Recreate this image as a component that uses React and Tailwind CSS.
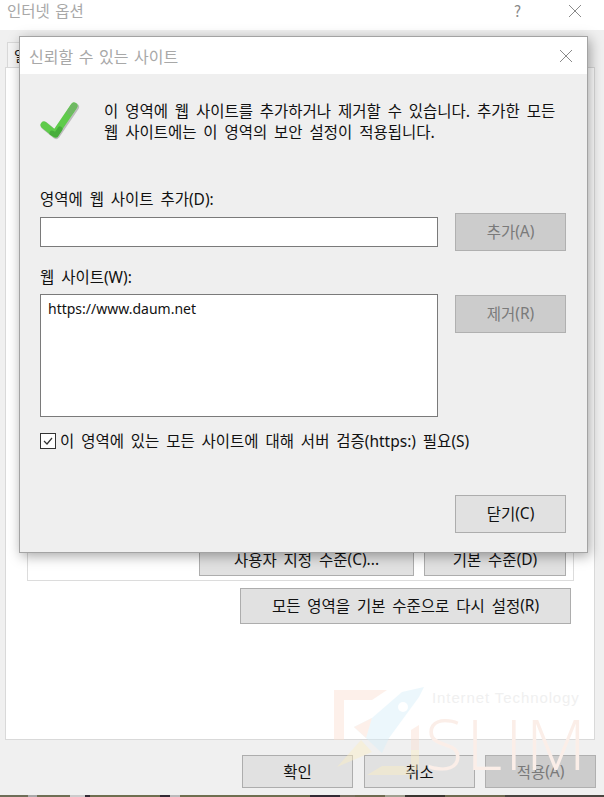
import React from 'react';

const font = { fontFamily: '"Noto Sans CJK KR", "Noto Sans", sans-serif' };

// the mottled edge of whatever sat under the screenshot
const bottomStrip = [
    [28, '#6e6e58'], [9, '#aaaaaa'], [33, '#6f6f55'], [15, '#cccccc'], [5, '#332a33'], [70, '#6f6f50'],
    [10, '#332a33'], [10, '#bbbbbb'], [130, '#6f6f50'], [30, '#332a33'], [15, '#777060'], [30, '#6e6a50'],
    [20, '#a0a090'], [40, '#3a3530'], [60, '#6e6a50'], [99, '#4a4540'],
];

// latin bits are set apart from the hangul next to them
function L({ children }) {
    return <span className="font-['Noto_Sans'] text-[15.5px] [word-spacing:0]">{children}</span>;
}

function WinButton({ className = '', children, disabled }) {
    return (
        <div className={`flex items-center justify-center border text-[15.5px] [word-spacing:3.4px] ${disabled ? 'border-[#b0b0b0] bg-[#cccccc] text-[#7a7a7a]' : 'border-[#adadad] bg-[#e1e1e1] text-[#111]'} ${className}`}>
            {children}
        </div>
    );
}

function CheckMark() {
    return (
        <svg width="40" height="40" viewBox="0 0 40 40" fill="none" strokeLinecap="round" strokeLinejoin="round" className="mt-[3px] shrink-0">
            <path d="M5 24 L16 33 L35 5" stroke="#9a9a9a" strokeWidth="8" opacity="0.6" />
            <path d="M4 23 L15 32 L34 4" stroke="#5fcb4b" strokeWidth="7" />
            <path d="M12 31 L16 33 L20 27" stroke="#48ad3c" strokeWidth="5" />
            <path d="M30 10 L34 4" stroke="#6fb863" strokeWidth="6" />
        </svg>
    );
}

function Watermark() {
    return (
        <div className="absolute left-[330px] top-[680px] h-[115px] w-[274px] pointer-events-none">
            <svg width="110" height="110" viewBox="0 0 110 110" className="absolute left-0 top-0" opacity="0.45">
                <path d="M4 10 H57 L42 20 H14 V60 H4 Z" fill="#fbe0d2" />
                <path d="M94 7 L72 12 L42 38 L24 47 L36 58 L52 73 L59 58 L89 17 Z" fill="#d6effa" />
                <path d="M24 47 L42 38 L36 58 Z" fill="#fbe0d2" />
                <circle cx="73" cy="27" r="5" fill="#ffffff" />
                <path d="M31 60 L42 72 L7 87 Z" fill="#fdefc4" />
                <path d="M37 95 L52 86 H74 L84 95 Z" fill="#fdefc4" />
                <path d="M81 50 L89 45 V70 H81 Z" fill="#fbe0d2" />
                <path d="M81 70 H89 V90 H81 Z" fill="#fdefc4" />
            </svg>
            <span className="absolute left-[102px] top-[9px] text-[15px] leading-[18px] tracking-[0.9px] text-[#f0f0f0]" style={{ fontFamily: '"Liberation Sans", sans-serif' }}>Internet Technology</span>
            <span className="absolute left-[95px] top-[18px] text-[70px] font-light leading-[90px] tracking-[3px] text-[#fbeee8]" style={{ fontFamily: '"Open Sans", sans-serif' }}>SLIM</span>
        </div>
    );
}

function TrustedSitesDialog() {
    return (
        <div className="absolute left-[19px] top-[36px] flex h-[517px] w-[569px] flex-col border border-[#a3a3a3] bg-[#efefef] shadow-[2px_3px_12px_rgba(0,0,0,0.35)]">
            <div className="flex h-[37px] items-center justify-between bg-white pl-[9px] pr-[14px]">
                <span className="text-[16px] [word-spacing:2px] text-[#a8a8a8]">신뢰할 수 있는 사이트</span>
                <svg width="14" height="14" viewBox="0 0 14 14" stroke="#8a8a8a" strokeWidth="1"><path d="M1 1 L13 13 M13 1 L1 13" /></svg>
            </div>

            <div className="flex flex-1 flex-col pl-[20px] pr-[21px] text-[15.5px] text-[#111] [word-spacing:3.4px]">
                <div className="mt-[25px] flex gap-[24px]">
                    <CheckMark />
                    <p className="mt-[1px] leading-[21px]">
                        이 영역에 웹 사이트를 추가하거나 제거할 수 있습니다. 추가한 모든<br />
                        웹 사이트에는 이 영역의 보안 설정이 적용됩니다.
                    </p>
                </div>

                <div className="mt-[46px] leading-[21px]">영역에 웹 사이트 추가<L>(D):</L></div>
                <div className="mt-[7px] flex items-start justify-between">
                    <div className="h-[30px] w-[398px] border border-[#7a7a7a] bg-white" />
                    <WinButton disabled className="mt-[-4px] h-[38px] w-[111px]">추가<L>(A)</L></WinButton>
                </div>

                <div className="mt-[15px] leading-[21px]">웹 사이트<L>(W):</L></div>
                <div className="mt-[6px] flex items-start justify-between">
                    <div className="h-[123px] w-[398px] border border-[#7a7a7a] bg-white px-[7px] pt-[3px] font-['Noto_Sans'] text-[14px] leading-[21px] [word-spacing:0]">https://www.daum.net</div>
                    <WinButton disabled className="mt-[1px] h-[38px] w-[111px]">제거<L>(R)</L></WinButton>
                </div>

                <div className="mt-[13px] flex items-center gap-[4px]">
                    <div className="flex h-[16px] w-[16px] items-center justify-center border border-[#333] bg-white">
                        <svg width="12" height="12" viewBox="0 0 12 12" fill="none" stroke="#333" strokeWidth="1.2"><path d="M2 6 L5 9 L10 3" /></svg>
                    </div>
                    <span className="leading-[21px]">이 영역에 있는 모든 사이트에 대해 서버 검증<L>(https:)</L> 필요<L>(S)</L></span>
                </div>

                <div className="mt-auto mb-[19px] flex justify-end">
                    <WinButton className="h-[38px] w-[111px]">닫기<L>(C)</L></WinButton>
                </div>
            </div>
        </div>
    );
}

export default function App() {
    return (
        <div className="relative flex h-[797px] w-[604px] flex-col overflow-hidden bg-white" style={font}>
            <div className="flex h-[30px] shrink-0 items-start justify-between bg-white pl-[7px] pr-[22px]">
                <span className="text-[15.5px] leading-[21px] [word-spacing:2px] text-[#a8a8a8]">인터넷 옵션</span>
                <div className="flex items-center gap-[47px] pt-[3px]">
                    <span className="text-[15px] leading-[16px] text-[#8a8a8a]">?</span>
                    <svg width="14" height="14" viewBox="0 0 14 14" stroke="#8a8a8a" strokeWidth="1"><path d="M1 1 L13 13 M13 1 L1 13" /></svg>
                </div>
            </div>

            <div className="flex flex-1 flex-col bg-[#f0f0f0] pl-[5px] pr-[9px] pt-[12px]">
                <div className="ml-[2px] h-[25px] w-[40px] border border-b-0 border-[#d9d9d9] bg-[#f5f5f5] pl-[6px] text-[14px] leading-[24px] text-[#111]">일반</div>
                <div className="flex h-[673px] flex-col border border-[#d9d9d9] bg-white pl-[21px] pr-[20px]">
                    <div className="mt-[8px] flex h-[505px] items-end justify-end gap-[10px] border border-[#dcdcdc] pb-[4px] pr-[7px]">
                        <WinButton className="h-[32px] w-[215px]">사용자 지정 수준<L>(C)...</L></WinButton>
                        <WinButton className="h-[32px] w-[142px]">기본 수준<L>(D)</L></WinButton>
                    </div>
                    <div className="mt-[7px] flex justify-end pr-[3px]">
                        <WinButton className="h-[36px] w-[331px]">모든 영역을 기본 수준으로 다시 설정<L>(R)</L></WinButton>
                    </div>
                </div>
                <div className="mt-[15px] flex justify-end gap-[10px] mr-[-1px]">
                    <WinButton className="mr-[1px] h-[33px] w-[111px]">확인</WinButton>
                    <WinButton className="h-[33px] w-[111px]">취소</WinButton>
                    <WinButton disabled className="h-[33px] w-[111px]">적용<L>(A)</L></WinButton>
                </div>
            </div>

            <div className="flex h-[2px] shrink-0">
                {bottomStrip.map(([w, color], i) => (
                    <div key={i} className="h-full" style={{ width: w, backgroundColor: color }} />
                ))}
            </div>

            <Watermark />
            <TrustedSitesDialog />
        </div>
    );
}
